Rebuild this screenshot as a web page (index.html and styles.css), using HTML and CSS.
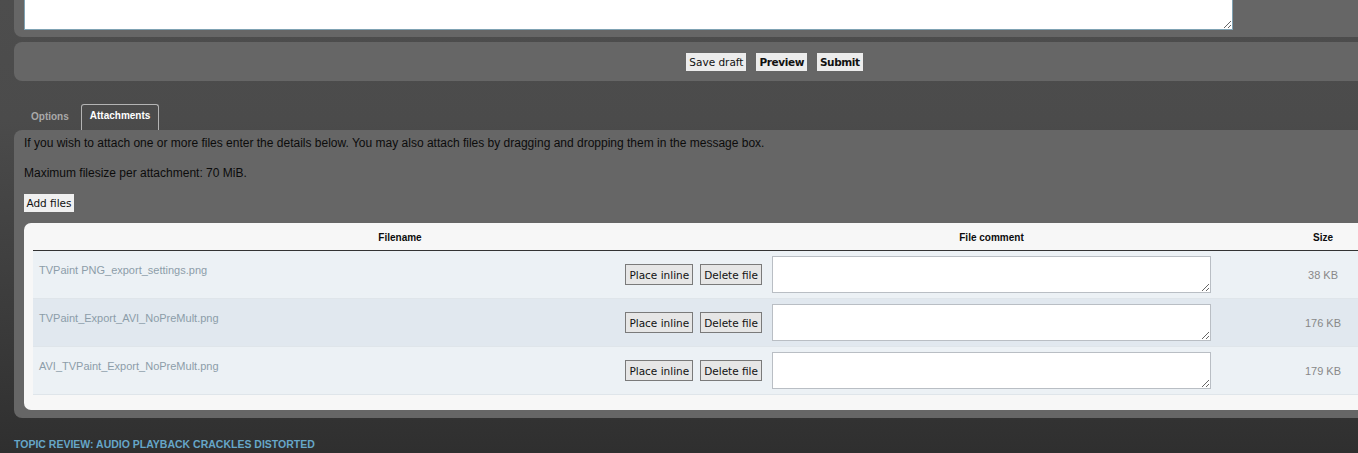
FILE: index.html
```html
<!DOCTYPE html>
<html lang="en">
<head>
    <meta charset="UTF-8">
    <title>Post reply - Attachments</title>
    <link rel="stylesheet" href="styles.css">
</head>
<body>

<div class="page">
    <div class="panel panel-message">
        <textarea class="message-box"></textarea>
    </div>

    <div class="panel panel-submit">
        <button class="btn">Save draft</button>
        <button class="btn btn-strong">Preview</button>
        <button class="btn btn-strong">Submit</button>
    </div>

    <ul class="tabs">
        <li class="tab">Options</li>
        <li class="tab active">Attachments</li>
    </ul>

    <div class="panel panel-attach">
        <p>If you wish to attach one or more files enter the details below. You may also attach files by dragging and dropping them in the message box.</p>
        <p>Maximum filesize per attachment: 70 MiB.</p>
        <button class="btn btn-add">Add files</button>

        <div class="file-box">
            <table class="file-list">
                <thead>
                    <tr>
                        <th class="col-name">Filename</th>
                        <th class="col-comment">File comment</th>
                        <th class="col-size">Size</th>
                    </tr>
                </thead>
                <tbody>
                    <tr>
                        <td class="col-name">
                            <div class="file-row">
                                <span class="file-name">TVPaint PNG_export_settings.png</span>
                                <span class="file-actions">
                                    <button class="btn btn-small">Place inline</button>
                                    <button class="btn btn-small">Delete file</button>
                                </span>
                            </div>
                        </td>
                        <td class="col-comment"><textarea class="comment"></textarea></td>
                        <td class="col-size">38 KB</td>
                    </tr>
                    <tr class="alt">
                        <td class="col-name">
                            <div class="file-row">
                                <span class="file-name">TVPaint_Export_AVI_NoPreMult.png</span>
                                <span class="file-actions">
                                    <button class="btn btn-small">Place inline</button>
                                    <button class="btn btn-small">Delete file</button>
                                </span>
                            </div>
                        </td>
                        <td class="col-comment"><textarea class="comment"></textarea></td>
                        <td class="col-size">176 KB</td>
                    </tr>
                    <tr>
                        <td class="col-name">
                            <div class="file-row">
                                <span class="file-name">AVI_TVPaint_Export_NoPreMult.png</span>
                                <span class="file-actions">
                                    <button class="btn btn-small">Place inline</button>
                                    <button class="btn btn-small">Delete file</button>
                                </span>
                            </div>
                        </td>
                        <td class="col-comment"><textarea class="comment"></textarea></td>
                        <td class="col-size">179 KB</td>
                    </tr>
                </tbody>
            </table>
        </div>
    </div>

    <h3 class="review-title">Topic review: Audio playback crackles distorted</h3>
</div>

</body>
</html>
```

FILE: styles.css
```css
html, body {
    margin: 0;
    padding: 0;
    overflow: hidden;
}
body {
    font-family: "Liberation Sans", Arial, sans-serif;
    font-size: 12px;
    color: #0c0c0c;
    background: linear-gradient(#4d4d4d 0, #4b4b4b 120px, #3a3a3a 330px, #2f2f2f 453px);
    min-height: 453px;
}
.page {
    width: 1521px;
    margin-left: 14px;
}
.panel {
    background-color: #666;
}
.panel-message {
    height: 37px;
    padding-left: 10px;
    border-radius: 0 0 0 8px;
    box-sizing: border-box;
}
.message-box {
    display: block;
    width: 1209px;
    height: 30px;
    margin: 0;
    border: 1px solid #7fa2b3;
    border-top: 0;
    background: #fff;
    box-sizing: border-box;
}
.panel-submit {
    margin-top: 5px;
    height: 39px;
    padding-top: 11px;
    box-sizing: border-box;
    border-radius: 8px;
    text-align: center;
    font-size: 0;
}
.btn {
    font-family: "DejaVu Sans", Verdana, sans-serif;
    font-size: 10.5px;
    color: #111;
    background-color: #ececec;
    border: 0;
    margin: 0;
    height: 18px;
    padding: 0 3px;
    vertical-align: top;
}
.panel-submit .btn {
    margin: 0 5px;
}
.btn-strong {
    font-weight: bold;
    letter-spacing: -0.4px;
}
.tabs {
    list-style: none;
    margin: 22px 0 0;
    padding: 0 0 0 7px;
    display: flex;
    height: 27px;
    align-items: flex-end;
}
.tab {
    font-size: 10px;
    font-weight: bold;
    color: #a9a9a9;
    padding: 0 10px;
    height: 23px;
    line-height: 20px;
}
.tab.active {
    color: #fff;
    margin-left: 2px;
    height: 26px;
    line-height: 22px;
    padding: 0 8px;
    border: 1px solid #b4b4b4;
    border-bottom: 0;
    border-radius: 3px 3px 0 0;
    box-sizing: border-box;
}
.panel-attach {
    padding: 5px 0 8px 10px;
    border-radius: 8px 0 0 8px;
}
.panel-attach p {
    margin: 0 0 14px;
    line-height: 16px;
}
.btn-add {
    display: block;
    width: 50px;
    padding: 0;
    background-color: #f0f0f0;
    margin-top: -1px;
}
.file-box {
    margin-top: 11px;
    background-color: #f7f7f7;
    border-radius: 7px 0 0 7px;
    padding: 2px 0 15px 9px;
}
.file-list {
    border-collapse: collapse;
    table-layout: fixed;
    width: 1397px;
}
.file-list th {
    font-size: 10px;
    font-weight: bold;
    height: 25px;
    padding: 0;
    text-align: center;
    border-bottom: 1px solid #333;
}
th.col-name { width: 734px; }
th.col-comment { width: 449px; }
th.col-size { width: 214px; }
.file-list td {
    padding: 0;
    background-color: #ecf1f5;
    border-bottom: 1px solid #dfe5ea;
    height: 42px;
}
.file-list tr.alt td {
    background-color: #e1e8ef;
}
.file-list td.col-name {
    vertical-align: top;
}
.file-row {
    display: flex;
    justify-content: space-between;
    padding: 0 5px 0 6px;
}
.file-name {
    color: #8c9da9;
    font-size: 11px;
    padding-top: 13px;
}
.file-actions {
    display: flex;
    gap: 7px;
    padding-top: 13px;
}
.btn-small {
    height: 21px;
    padding: 0 3px;
    border: 1px solid #7a7a7a;
    background-color: #e6e6e6;
}
.file-list td.col-comment {
    vertical-align: top;
    padding: 5px 0 0 5px;
}
.comment {
    display: block;
    width: 439px;
    height: 37px;
    margin: 0;
    border: 1px solid #b9bec4;
    background: #fff;
    box-sizing: border-box;
}
.file-list td.col-size {
    text-align: center;
    color: #888;
    font-size: 11px;
}
.review-title {
    margin: 20px 0 0;
    font-size: 10.5px;
    font-weight: bold;
    text-transform: uppercase;
    color: #66a6c8;
}
```
